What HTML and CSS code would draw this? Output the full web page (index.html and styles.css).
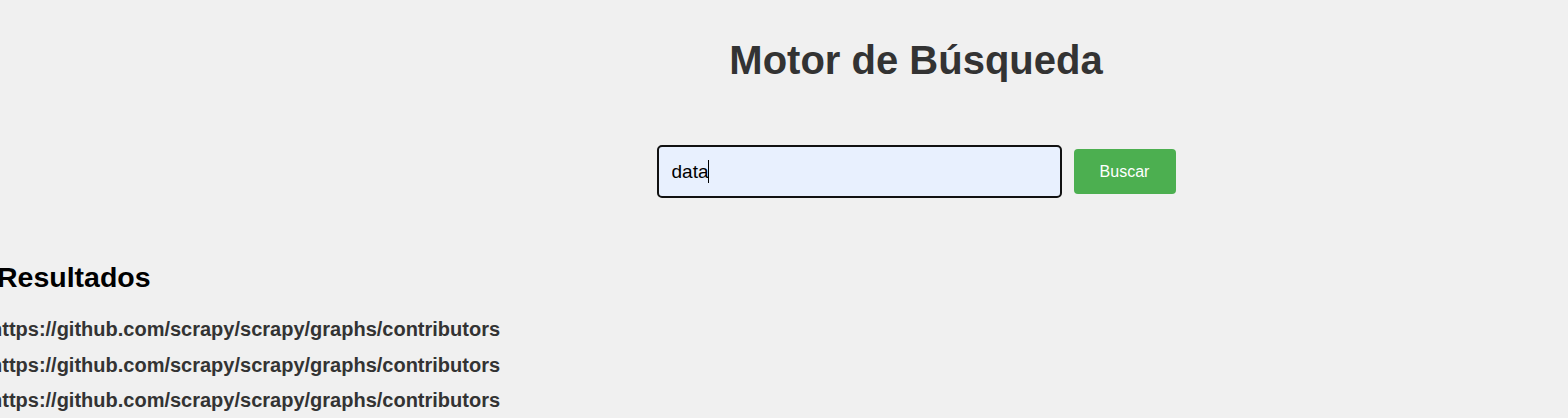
FILE: index.html
```html
<!DOCTYPE html>
<html lang="es">
<head>
<meta charset="utf-8">
<title>Motor de Búsqueda</title>
<link rel="stylesheet" href="styles.css">
</head>
<body>
<div class="page">
  <h1 class="title">Motor de Búsqueda</h1>
  <form class="search" onsubmit="return false">
    <div class="input-wrap">
      <input class="search-input" type="text" value="data">
      <span class="caret"></span>
    </div>
    <button class="search-btn" type="submit">Buscar</button>
  </form>
  <section class="results">
    <h2 class="results-title">Resultados</h2>
    <div class="results-list">
      <a class="result-link" href="#">https://github.com/scrapy/scrapy/graphs/contributors</a>
      <a class="result-link" href="#">https://github.com/scrapy/scrapy/graphs/contributors</a>
      <a class="result-link" href="#">https://github.com/scrapy/scrapy/graphs/contributors</a>
    </div>
  </section>
</div>
</body>
</html>
```
FILE: styles.css
```css
html, body {
  margin: 0;
  padding: 0;
  background: #f0f0f0;
  overflow: hidden;
}
body {
  font-family: "Liberation Sans", Arial, sans-serif;
  height: 418px;
}
.page {
  width: 1836px;
  margin-left: -2px;
  display: flex;
  flex-direction: column;
}
.title {
  margin: 37px 0 0;
  font-size: 40px;
  line-height: 46px;
  font-weight: bold;
  color: #333;
  text-align: center;
}
.search {
  margin: 62px 0 0;
  display: flex;
  justify-content: center;
  align-items: center;
  gap: 12px;
}
.input-wrap {
  position: relative;
  display: flex;
}
.search-input {
  box-sizing: border-box;
  width: 405px;
  height: 53px;
  padding: 0 13px;
  border: 2px solid #111;
  border-radius: 5px;
  background: #e8f0fe;
  font-family: "Liberation Sans", Arial, sans-serif;
  font-size: 19px;
  color: #000;
  outline: none;
}
.caret {
  position: absolute;
  left: 51px;
  top: 15px;
  width: 1px;
  height: 23px;
  background: #000;
}
.search-btn {
  box-sizing: border-box;
  width: 102px;
  height: 45px;
  border: none;
  border-radius: 4px;
  background: #4caf50;
  color: #fff;
  font-family: "Liberation Sans", Arial, sans-serif;
  font-size: 16px;
  padding: 0;
}
.results {
  margin-top: 63px;
  display: flex;
  flex-direction: column;
}
.results-title {
  margin: 0 0 0 -1px;
  font-size: 28.5px;
  line-height: 32px;
  font-weight: bold;
  color: #000;
}
.results-list {
  margin: 25px 0 0 -8px;
  display: flex;
  flex-direction: column;
  gap: 12.5px;
}
.result-link {
  font-size: 20px;
  line-height: 23px;
  font-weight: bold;
  color: #333;
  text-decoration: none;
}
```
